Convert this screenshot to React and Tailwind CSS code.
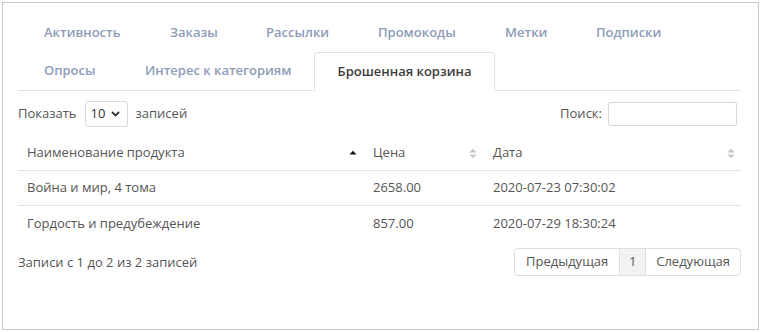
import React from "react";

const font = { fontFamily: '"Open Sans", "Noto Sans", sans-serif' };

function SortBoth() {
  return (
    <svg width="8" height="11" viewBox="0 0 8 11" className="block">
      <path d="M0.5 4.5 L4 0.8 L7.5 4.5 Z" fill="#c4c4c4" />
      <path d="M0.5 6.5 L4 10.2 L7.5 6.5 Z" fill="#c4c4c4" />
    </svg>
  );
}

function SortUp() {
  return (
    <svg width="8" height="11" viewBox="0 0 8 11" className="block">
      <path d="M0.5 6.5 L4 2.8 L7.5 6.5 Z" fill="#111" />
    </svg>
  );
}

const tabCls = "h-[38px] pl-[25px] flex items-center whitespace-nowrap text-[13px] font-semibold text-[#8d9cb8]";

export default function App() {
  return (
    <div className="w-[761px] h-[332px] bg-white p-[2px]" style={font}>
      <div className="h-[328px] border border-[#c9c9c9] pl-[15px] pr-[17px] pt-[11px] text-[13px] text-[#555]">
        <div className="border-b border-[#dee2e6]">
          <div className="flex pl-[1px]">
            <div className={tabCls + " w-[126px]"}>Активность</div>
            <div className={tabCls + " w-[96px]"}>Заказы</div>
            <div className={tabCls + " w-[112px]"}>Рассылки</div>
            <div className={tabCls + " w-[127px]"}>Промокоды</div>
            <div className={tabCls + " w-[91px]"}>Метки</div>
            <div className={tabCls + " w-[114px]"}>Подписки</div>
          </div>
          <div className="flex items-end pl-[1px]">
            <div className={tabCls + " w-[101px]"}>Опросы</div>
            <div className={tabCls + " w-[194px]"}>Интерес к категориям</div>
            <div className="w-[181px] h-[39px] -mb-px flex items-center justify-center whitespace-nowrap border border-[#dee2e6] border-b-white bg-white rounded-t-[4px] text-[13px] font-semibold text-[#3d3d3d]">
              Брошенная корзина
            </div>
          </div>
        </div>

        <div className="mt-[10px] flex items-center justify-between h-[26px]">
          <div className="flex items-center">
            <span>Показать</span>
            <div className="ml-[8px] w-[43px] h-[26px] border border-[#d9d9d9] rounded-[3px] flex items-center justify-between pl-[5px] pr-[7px] text-[#333]">
              <span>10</span>
              <svg width="9" height="6" viewBox="0 0 9 6">
                <path d="M1 1 L4.5 4.5 L8 1" stroke="#333" strokeWidth="1.8" fill="none" />
              </svg>
            </div>
            <span className="ml-[8px]">записей</span>
          </div>
          <div className="flex items-center pr-[4px]">
            <span>Поиск:</span>
            <div className="ml-[6px] w-[129px] h-[24px] border border-[#d9d9d9] rounded-[2px] bg-white" />
          </div>
        </div>

        <div className="mt-[9px]">
          <div className="flex h-[35px] items-center border-b border-[#e3e3e3]">
            <div className="w-[345px] pl-[9px] pr-[6px] flex items-center justify-between">
              <span>Наименование продукта</span>
              <SortUp />
            </div>
            <div className="w-[120px] pl-[10px] pr-[6px] flex items-center justify-between">
              <span>Цена</span>
              <SortBoth />
            </div>
            <div className="flex-1 pl-[10px] pr-[6px] flex items-center justify-between">
              <span>Дата</span>
              <SortBoth />
            </div>
          </div>
          <div className="flex h-[35px] items-center border-b border-[#e3e3e3]">
            <div className="w-[345px] pl-[9px]">Война и мир, 4 тома</div>
            <div className="w-[120px] pl-[10px]">2658.00</div>
            <div className="flex-1 pl-[10px]">2020-07-23 07:30:02</div>
          </div>
          <div className="flex h-[35px] items-center">
            <div className="w-[345px] pl-[9px]">Гордость и предубеждение</div>
            <div className="w-[120px] pl-[10px]">857.00</div>
            <div className="flex-1 pl-[10px]">2020-07-29 18:30:24</div>
          </div>
        </div>

        <div className="mt-[7px] flex items-center justify-between">
          <span className="pt-[2px]">Записи с 1 до 2 из 2 записей</span>
          <div className="flex h-[28px] border border-[#dedede] rounded-[4px] overflow-hidden">
            <div className="px-[11px] flex items-center">Предыдущая</div>
            <div className="w-[27px] flex items-center justify-center bg-[#f2f2f2] border-x border-[#dedede]">1</div>
            <div className="px-[10px] flex items-center">Следующая</div>
          </div>
        </div>
      </div>
    </div>
  );
}
